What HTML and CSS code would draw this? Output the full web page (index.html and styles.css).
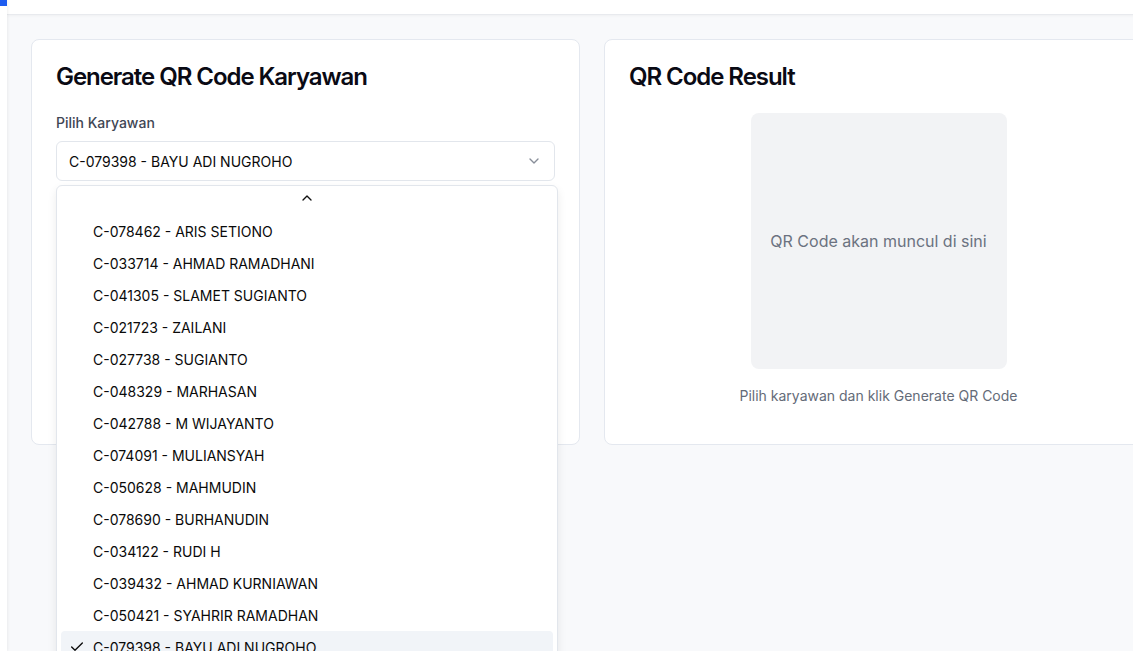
FILE: index.html
```html
<!DOCTYPE html>
<html lang="id">
<head>
<meta charset="utf-8">
<title>Generate QR Code</title>
<link rel="stylesheet" href="styles.css">
</head>
<body>
<div class="app">
  <aside class="sidebar"><div class="brand"></div></aside>
  <div class="main">
    <header class="topbar"></header>
    <main class="content">
      <section class="card">
        <h2 class="card-title">Generate QR Code Karyawan</h2>
        <label class="field-label">Pilih Karyawan</label>
        <div class="select-wrap">
          <div class="select">
            <span>C-079398 - BAYU ADI NUGROHO</span>
            <svg class="chev" width="16" height="16" viewBox="0 0 24 24" fill="none" stroke="currentColor" stroke-width="2" stroke-linecap="round" stroke-linejoin="round"><path d="m6 9 6 6 6-6"/></svg>
          </div>
          <div class="dropdown">
            <div class="scroll-up">
              <svg width="16" height="16" viewBox="0 0 24 24" fill="none" stroke="currentColor" stroke-width="2" stroke-linecap="round" stroke-linejoin="round"><path d="m18 15-6-6-6 6"/></svg>
            </div>
            <ul class="options">
              <li>C-078462 - ARIS SETIONO</li>
              <li>C-033714 - AHMAD RAMADHANI</li>
              <li>C-041305 - SLAMET SUGIANTO</li>
              <li>C-021723 - ZAILANI</li>
              <li>C-027738 - SUGIANTO</li>
              <li>C-048329 - MARHASAN</li>
              <li>C-042788 - M WIJAYANTO</li>
              <li>C-074091 - MULIANSYAH</li>
              <li>C-050628 - MAHMUDIN</li>
              <li>C-078690 - BURHANUDIN</li>
              <li>C-034122 - RUDI H</li>
              <li>C-039432 - AHMAD KURNIAWAN</li>
              <li>C-050421 - SYAHRIR RAMADHAN</li>
              <li class="selected"><svg class="check" width="16" height="16" viewBox="0 0 24 24" fill="none" stroke="currentColor" stroke-width="2" stroke-linecap="round" stroke-linejoin="round"><path d="M20 6 9 17l-5-5"/></svg>C-079398 - BAYU ADI NUGROHO</li>
            </ul>
          </div>
        </div>
      </section>
      <section class="card">
        <h2 class="card-title">QR Code Result</h2>
        <div class="result">
          <div class="qr-box">QR Code akan muncul di sini</div>
          <p class="hint">Pilih karyawan dan klik Generate QR Code</p>
        </div>
      </section>
    </main>
  </div>
</div>
</body>
</html>
```

FILE: styles.css
```css
* { box-sizing: border-box; }
html, body { margin: 0; padding: 0; height: 100%; overflow: hidden; }
body {
  font-family: Inter, "Noto Sans", sans-serif;
  background: #f8f9fb;
  color: #0a0a0a;
}
.app { display: flex; height: 100vh; }
.sidebar {
  width: 7px;
  flex: 0 0 7px;
  background: #fff;
  box-shadow: 1px 0 3px rgba(0,0,0,0.06);
  position: relative;
  z-index: 2;
}
.brand { width: 7px; height: 6px; background: #1d5cf0; }
.main { flex: 1 0 auto; display: flex; flex-direction: column; }
.topbar {
  height: 15px;
  background: #fff;
  border-bottom: 1px solid #e8eaee;
  box-shadow: 0 1px 3px rgba(0,0,0,0.04);
}
.content {
  display: grid;
  grid-template-columns: 549px 549px;
  gap: 24px;
  padding: 24px;
  align-items: start;
}
.card {
  background: #fff;
  border: 1px solid #e4e8ef;
  border-radius: 8px;
  height: 406px;
  padding: 24px;
}
.card-title {
  margin: 0;
  font-size: 24px;
  line-height: 24px;
  font-weight: 600;
  letter-spacing: -1.05px;
  color: #0a0a14;
  padding-top: 1px;
}
.field-label {
  display: block;
  margin-top: 24px;
  font-size: 14px;
  line-height: 20px;
  font-weight: 500;
  color: #3f4654;
}
.select-wrap { position: relative; margin-top: 8px; }
.select {
  height: 40px;
  border: 1px solid #e2e6ec;
  border-radius: 6px;
  display: flex;
  align-items: center;
  justify-content: space-between;
  padding: 0 12px 0 12px;
  font-size: 14px;
  color: #0a0a0a;
}
.chev { color: #6b7280; opacity: 0.8; }
.dropdown {
  position: absolute;
  top: 44px;
  left: 0;
  width: 502px;
  background: #fff;
  border: 1px solid #e2e6ec;
  border-radius: 6px;
  box-shadow: 0 4px 10px rgba(0,0,0,0.08);
  padding: 4px;
  z-index: 5;
}
.scroll-up {
  display: flex;
  justify-content: center;
  align-items: flex-start;
  height: 25px;
  color: #111;
}
.options { list-style: none; margin: 0; padding: 0; }
.options li {
  height: 32px;
  display: flex;
  align-items: center;
  padding-left: 32px;
  font-size: 14px;
  color: #0a0a0a;
  border-radius: 4px;
  position: relative;
}
.options li.selected { background: #f1f4f8; }
.check { position: absolute; left: 8px; top: 8px; }
.result {
  display: flex;
  flex-direction: column;
  align-items: center;
  margin-top: 24px;
}
.qr-box {
  width: 256px;
  height: 256px;
  background: #f2f3f5;
  border-radius: 8px;
  display: flex;
  align-items: center;
  justify-content: center;
  font-size: 16px;
  color: #6b7280;
}
.hint {
  margin: 17px 0 0;
  font-size: 14px;
  line-height: 20px;
  color: #646b78;
}
```
